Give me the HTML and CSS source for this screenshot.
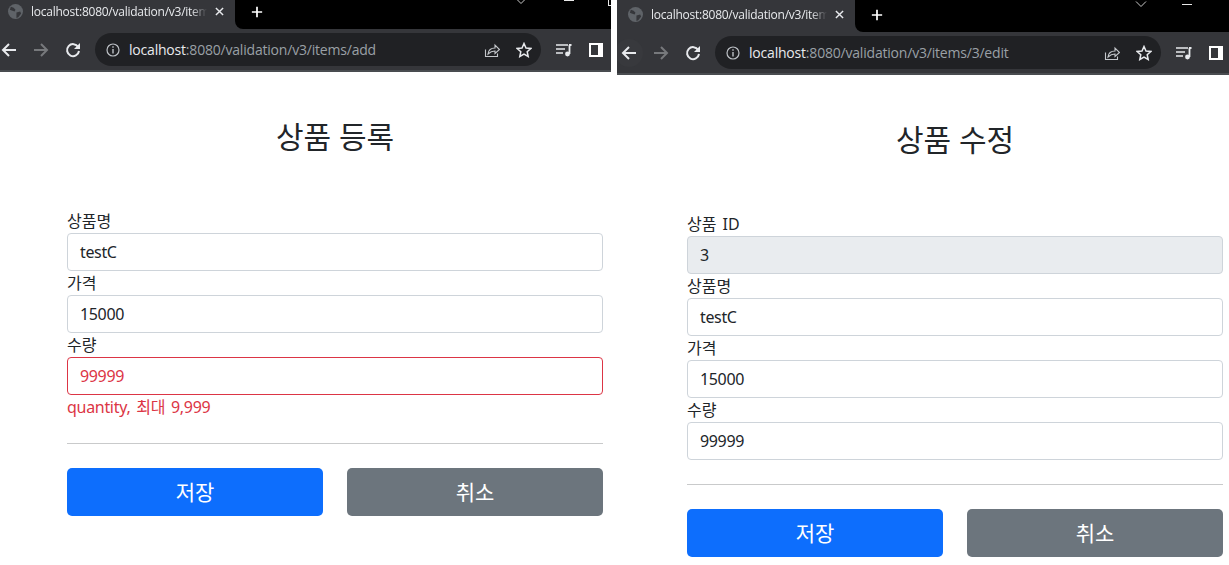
FILE: index.html
```html
<!DOCTYPE html>
<html lang="ko">
<head>
<meta charset="utf-8">
<title>상품</title>
<link rel="stylesheet" href="styles.css">
</head>
<body>
<div class="desktop">
  <section class="window window-left">
    <div class="tabstrip">
      <div class="tab">
        <svg class="favicon" viewBox="0 0 16 16"><circle cx="8" cy="8" r="8" fill="#5f6368"/><path d="M3 3l3 1 2 2-1 2-3-1-2-1zM9 9l4-1 1 2-3 4-2 1z" fill="#35363a"/></svg>
        <span class="tab-title">localhost:8080/validation/v3/items/add</span>
        <svg class="tab-close" viewBox="0 0 10 10"><path d="M1 1l8 8M9 1l-8 8" stroke="#e8eaed" stroke-width="1.6"/></svg>
      </div>
      <div class="tabrest">
        <svg class="newtab" viewBox="0 0 14 14"><path d="M7 1v12M1 7h12" stroke="#fff" stroke-width="2"/></svg>
        <svg class="chev" viewBox="0 0 12 7"><path d="M1 .5l5 5 5-5" fill="none" stroke="#c8c8c8"/></svg>
        <span class="minimize"></span>
        <span class="maxbox"></span>
      </div>
    </div>
    <div class="toolbar">
      <svg class="nav" viewBox="0 0 16 16"><path d="M15 8H2M8 2L2 8l6 6" fill="none" stroke="#e8eaed" stroke-width="2"/></svg>
      <svg class="nav" viewBox="0 0 16 16"><path d="M1 8h13M8 2l6 6-6 6" fill="none" stroke="#77797c" stroke-width="2"/></svg>
      <svg class="nav" viewBox="0 0 16 16"><path d="M13.2 5A6 6 0 1 0 14 9" fill="none" stroke="#e8eaed" stroke-width="2"/><path d="M15 1v6H9z" fill="#e8eaed"/></svg>
      <div class="omnibox">
        <svg class="info" viewBox="0 0 14 14"><circle cx="7" cy="7" r="6" fill="none" stroke="#bdc1c6" stroke-width="1.2"/><path d="M7 6v4.5M7 3.2v1.6" stroke="#bdc1c6" stroke-width="1.4"/></svg>
        <span class="url"><span class="host">localhost</span>:8080/validation/v3/items/add</span>
        <svg class="share" viewBox="0 0 16 16"><path d="M1.5 7.5v7h12v-3" fill="none" stroke="#c4c7cb" stroke-width="1.1"/><path d="M4 12c.5-4 3.500-6 7-6V3l4.500 4.500L11 11.500V9c-3 0-5 1-7 3z" fill="none" stroke="#c4c7cb" stroke-width="1.1"/></svg>
        <svg class="star" viewBox="0 0 16 16"><path d="M8 1.500l2 4.500 4.800.5-3.600 3.200 1 4.800L8 12.100l-4.200 2.400 1-4.800L1.200 6.500 6 6z" fill="none" stroke="#e8eaed" stroke-width="1.500"/></svg>
      </div>
      <svg class="media" viewBox="0 0 16 14"><path d="M0 2h12M0 6h9M0 10h7" stroke="#e8eaed" stroke-width="1.600"/><path d="M13 2h2.500M13.500 2v9" stroke="#e8eaed" stroke-width="1.800"/><circle cx="11.500" cy="11" r="2.400" fill="#e8eaed"/></svg>
      <span class="sidepanel"></span>
    </div>
    <main class="page">
      <h2 class="heading">상품 등록</h2>
      <form class="form">
        <label class="label">상품명</label>
        <div class="input">testC</div>
        <label class="label">가격</label>
        <div class="input">15000</div>
        <label class="label">수량</label>
        <div class="input input-error">99999</div>
        <div class="error-text">quantity, 최대 9,999</div>
        <hr class="rule">
        <div class="actions">
          <button class="btn btn-primary" type="button">저장</button>
          <button class="btn btn-secondary" type="button">취소</button>
        </div>
      </form>
    </main>
  </section>
  <section class="window window-right">
    <div class="tabstrip">
      <div class="tab">
        <svg class="favicon" viewBox="0 0 16 16"><circle cx="8" cy="8" r="8" fill="#5f6368"/><path d="M3 3l3 1 2 2-1 2-3-1-2-1zM9 9l4-1 1 2-3 4-2 1z" fill="#35363a"/></svg>
        <span class="tab-title">localhost:8080/validation/v3/items/3/edit</span>
        <svg class="tab-close" viewBox="0 0 10 10"><path d="M1 1l8 8M9 1l-8 8" stroke="#e8eaed" stroke-width="1.6"/></svg>
      </div>
      <div class="tabrest">
        <svg class="newtab" viewBox="0 0 14 14"><path d="M7 1v12M1 7h12" stroke="#fff" stroke-width="2"/></svg>
        <svg class="chev" viewBox="0 0 12 7"><path d="M1 .5l5 5 5-5" fill="none" stroke="#c8c8c8"/></svg>
        <span class="minimize"></span>
      </div>
    </div>
    <div class="toolbar">
      <svg class="nav" viewBox="0 0 16 16"><circle class="nav-hover" cx="8" cy="8" r="14"/><path d="M15 8H2M8 2L2 8l6 6" fill="none" stroke="#e8eaed" stroke-width="2"/></svg>
      <svg class="nav" viewBox="0 0 16 16"><path d="M1 8h13M8 2l6 6-6 6" fill="none" stroke="#77797c" stroke-width="2"/></svg>
      <svg class="nav" viewBox="0 0 16 16"><path d="M13.2 5A6 6 0 1 0 14 9" fill="none" stroke="#e8eaed" stroke-width="2"/><path d="M15 1v6H9z" fill="#e8eaed"/></svg>
      <div class="omnibox">
        <svg class="info" viewBox="0 0 14 14"><circle cx="7" cy="7" r="6" fill="none" stroke="#bdc1c6" stroke-width="1.2"/><path d="M7 6v4.5M7 3.2v1.6" stroke="#bdc1c6" stroke-width="1.4"/></svg>
        <span class="url"><span class="host">localhost</span>:8080/validation/v3/items/3/edit</span>
        <svg class="share" viewBox="0 0 16 16"><path d="M1.5 7.5v7h12v-3" fill="none" stroke="#c4c7cb" stroke-width="1.1"/><path d="M4 12c.5-4 3.500-6 7-6V3l4.500 4.500L11 11.500V9c-3 0-5 1-7 3z" fill="none" stroke="#c4c7cb" stroke-width="1.1"/></svg>
        <svg class="star" viewBox="0 0 16 16"><path d="M8 1.500l2 4.500 4.800.5-3.600 3.200 1 4.800L8 12.100l-4.200 2.400 1-4.800L1.200 6.500 6 6z" fill="none" stroke="#e8eaed" stroke-width="1.500"/></svg>
      </div>
      <svg class="media" viewBox="0 0 16 14"><path d="M0 2h12M0 6h9M0 10h7" stroke="#e8eaed" stroke-width="1.600"/><path d="M13 2h2.500M13.500 2v9" stroke="#e8eaed" stroke-width="1.800"/><circle cx="11.500" cy="11" r="2.400" fill="#e8eaed"/></svg>
      <span class="sidepanel"></span>
    </div>
    <main class="page">
      <h2 class="heading">상품 수정</h2>
      <form class="form">
        <label class="label">상품 ID</label>
        <div class="input input-readonly">3</div>
        <label class="label">상품명</label>
        <div class="input">testC</div>
        <label class="label">가격</label>
        <div class="input">15000</div>
        <label class="label">수량</label>
        <div class="input">99999</div>
        <hr class="rule">
        <div class="actions">
          <button class="btn btn-primary" type="button">저장</button>
          <button class="btn btn-secondary" type="button">취소</button>
        </div>
      </form>
    </main>
  </section>
</div>
</body>
</html>
```
FILE: styles.css
```css
* { box-sizing: border-box; }
html, body { margin: 0; height: 100%; overflow: hidden; background: #fff; }
body {
  font-family: "Noto Sans", "Noto Sans CJK KR", sans-serif;
  font-size: 16px;
  line-height: 24px;
  color: #212529;
}
.desktop { display: flex; width: 1229px; height: 565px; gap: 6px; }
.window { display: flex; flex-direction: column; flex: none; overflow: hidden; }
.window-left { width: 611px; }
.window-right { width: 612px; }

.tabstrip { display: flex; background: #35363a; flex: none; }
.window-left .tabstrip { height: 29px; }
.window-right .tabstrip { height: 32px; }
.tab {
  width: 235px; flex: none; display: flex; align-items: center;
  padding: 0 0 6px 8px; color: #e8eaed;
}
.window-right .tab { width: 238px; padding: 0 0 3px 11px; }
.favicon { width: 15px; height: 15px; flex: none; margin-right: 8px; }
.tab-title {
  font-family: "Open Sans", "Noto Sans", sans-serif; font-size: 12px; letter-spacing: -.25px;
  width: 176px; white-space: nowrap; overflow: hidden; flex: none;
  -webkit-mask-image: linear-gradient(to right, #000 calc(100% - 16px), transparent);
  mask-image: linear-gradient(to right, #000 calc(100% - 16px), transparent);
}
.tab-close { width: 9px; height: 9px; margin-left: 8px; flex: none; }

.tabrest {
  flex: 1; position: relative; background: #000; border-bottom-left-radius: 8px;
  display: flex; align-items: center; padding: 0 0 6px 16px;
}
.window-right .tabrest { padding-bottom: 3px; }
.newtab { width: 12px; height: 12px; flex: none; }
.chev { position: absolute; left: 280px; top: -2px; width: 12px; height: 7px; }
.window-right .chev { left: 280px; top: 1px; }
.minimize { position: absolute; left: 329px; top: 0; width: 10px; height: 1px; background: #e8e8e8; }
.window-right .minimize { left: 327px; top: 4px; }
.maxbox { position: absolute; left: 373px; top: -1px; width: 8px; height: 7px; border: 1px solid #e8e8e8; }

.toolbar {
  height: 43px; background: #35363a; display: flex; align-items: center; flex: none;
  border-bottom: 2px solid #494c50; padding: 0 8px 0 1px;
}
.window-right .toolbar { padding: 0 6px 0 4px; }
.nav { width: 16px; height: 16px; flex: none; margin-right: 16px; overflow: visible; }
.nav-hover { fill: #38393d; }
.nav:nth-child(3) { margin-right: 14px; }
.omnibox {
  flex: 1; height: 33px; background: #202124; border-radius: 17px;
  display: flex; align-items: center; padding: 0 9px 0 11px; min-width: 0;
}
.info { width: 14px; height: 14px; flex: none; margin-right: 9px; }
.url {
  flex: 1; font-family: "Open Sans", "Noto Sans", sans-serif; font-size: 14px; color: #9aa0a6;
  letter-spacing: -.2px; white-space: nowrap;
}
.host { color: #e8eaed; }
.share { width: 16px; height: 16px; flex: none; margin-right: 16px; }
.star { width: 16px; height: 16px; flex: none; }
.media { width: 16px; height: 14px; flex: none; margin-left: 15px; }
.sidepanel {
  width: 14px; height: 14px; flex: none; margin-left: 17px; border: 2px solid #fff;
  border-right-width: 5px; background: #35363a;
}

.page { flex: 1; padding-left: 67px; }
.window-right .page { padding-left: 70px; }
.heading {
  width: 536px; margin: 46px 0 0; height: 91px; text-align: center;
  font-size: 30px; line-height: 36px; padding-top: 1px; font-weight: 400;
}
.form { width: 536px; }
.label { display: block; height: 24px; word-spacing: 2px; }
.input {
  height: 38px; border: 1px solid #ced4da; border-radius: 4px; padding: 6px 12px;
  background: #fff; letter-spacing: -.35px;
}
.input-error { border-color: #dc3545; color: #dc3545; }
.input-readonly { background: #e9ecef; }
.error-text { color: #dc3545; height: 24px; letter-spacing: -.3px; word-spacing: 2px; }
.rule { margin: 24px 0; border: 0; border-top: 1px solid #c9cacb; height: 0; }
.actions { display: flex; gap: 24px; }
.btn {
  flex: 1; height: 48px; border: 0; border-radius: 5px; color: #fff; padding: 0;
  font-family: "Noto Sans", "Noto Sans CJK KR", sans-serif; font-size: 21px; line-height: 30px;
}
.btn-primary { background: #0d6efd; }
.btn-secondary { background: #6c757d; }
```
